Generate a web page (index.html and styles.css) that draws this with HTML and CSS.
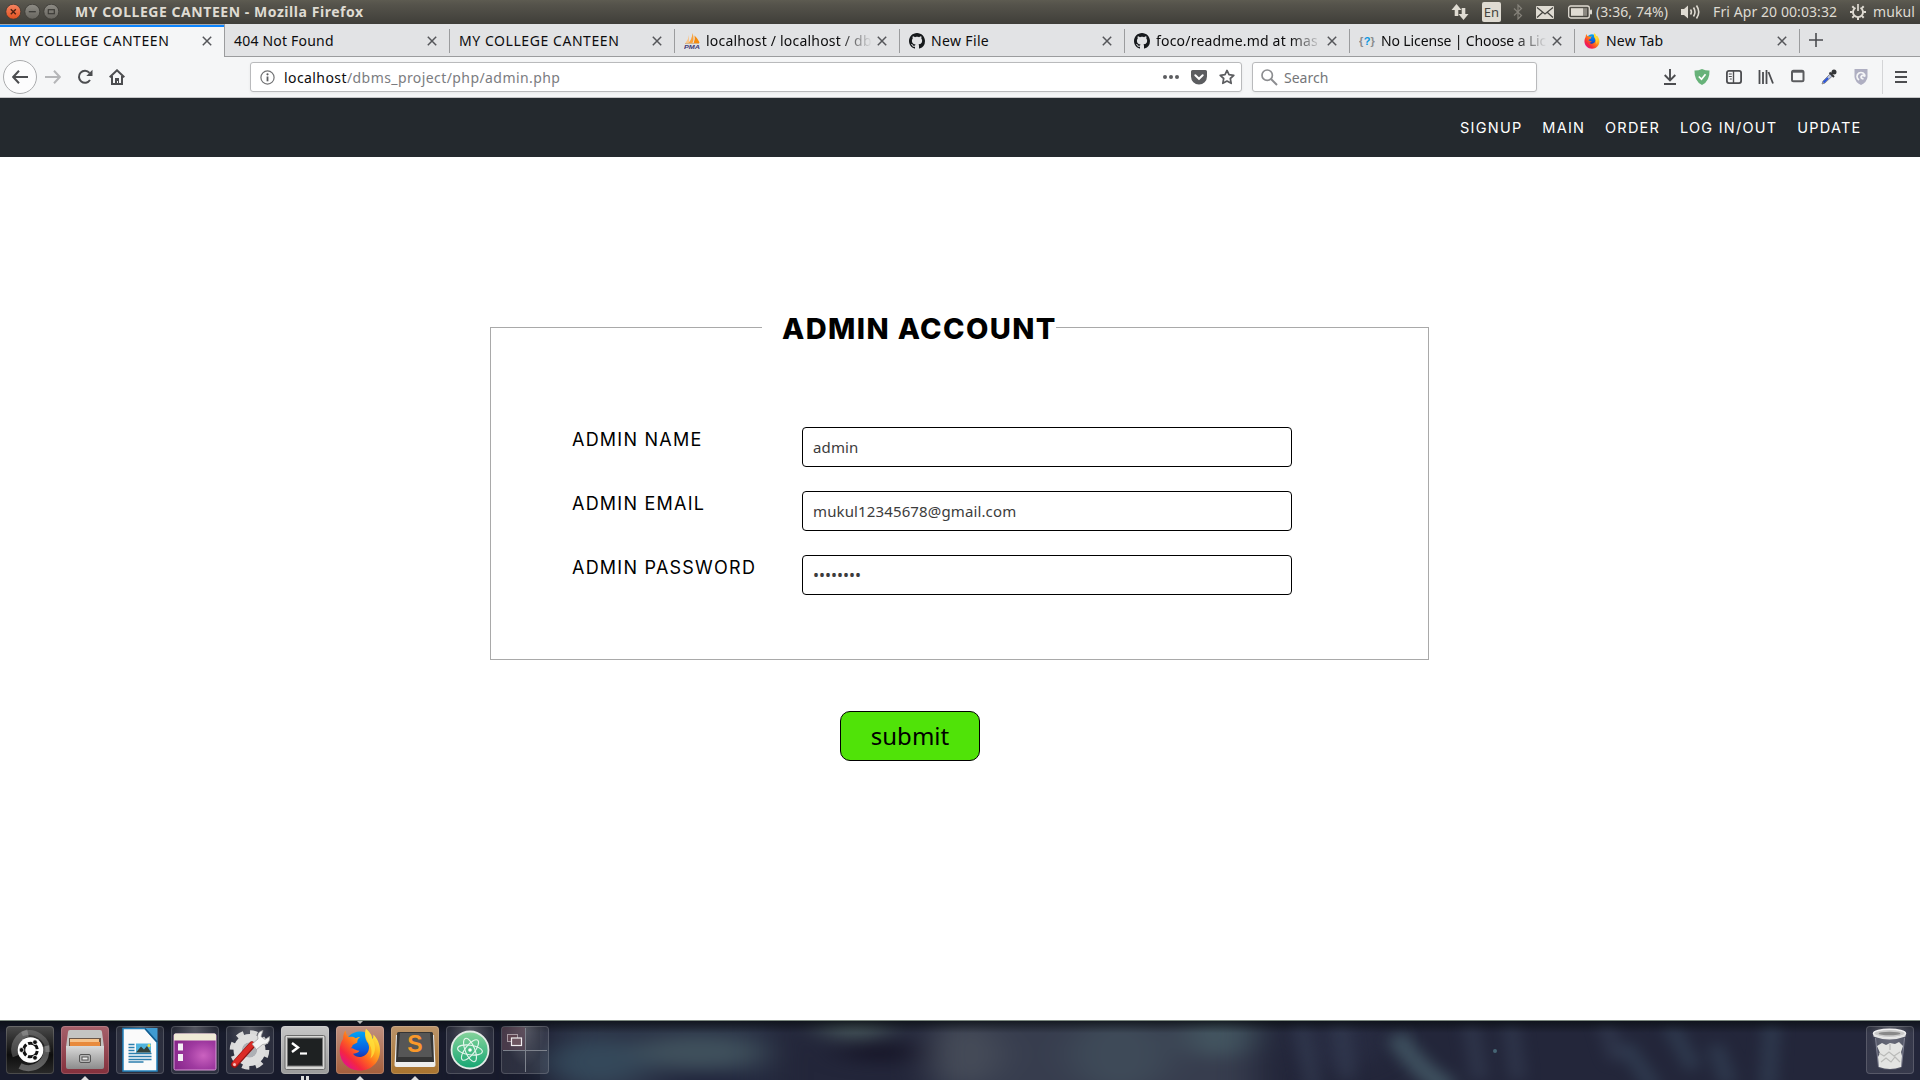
FILE: index.html
```html
<!DOCTYPE html>
<html lang="en">
<head>
<meta charset="utf-8">
<title>MY COLLEGE CANTEEN</title>
<link rel="stylesheet" href="styles.css">
</head>
<body>
<svg class="defs" width="0" height="0">
  <defs>
    <symbol id="close" viewBox="0 0 10 10"><path d="M.8.8l8.4 8.4M9.2.8L.8 9.2" stroke="#55565a" stroke-width="1.5" fill="none"/></symbol>
    <symbol id="github" viewBox="0 0 16 16"><path fill="#16191c" d="M8 0C3.58 0 0 3.58 0 8c0 3.54 2.29 6.53 5.47 7.59.4.07.55-.17.55-.38 0-.19-.01-.82-.01-1.49-2.01.37-2.53-.49-2.69-.94-.09-.23-.48-.94-.82-1.13-.28-.15-.68-.52-.01-.53.63-.01 1.08.58 1.23.82.72 1.21 1.87.87 2.33.66.07-.52.28-.87.51-1.07-1.78-.2-3.64-.89-3.64-3.95 0-.87.31-1.59.82-2.15-.08-.2-.36-1.02.08-2.12 0 0 .67-.21 2.2.82.64-.18 1.32-.27 2-.27s1.36.09 2 .27c1.53-1.04 2.2-.82 2.2-.82.44 1.1.16 1.92.08 2.12.51.56.82 1.27.82 2.15 0 3.07-1.87 3.75-3.65 3.95.29.25.54.73.54 1.48 0 1.07-.01 1.93-.01 2.2 0 .21.15.46.55.38A8.01 8.01 0 0 0 16 8c0-4.42-3.58-8-8-8z"/></symbol>
    <linearGradient id="fxBody" x1=".9" y1=".1" x2=".15" y2=".9"><stop offset="0" stop-color="#fff04a"/><stop offset=".3" stop-color="#ffb21f"/><stop offset=".55" stop-color="#ff6a1e"/><stop offset=".8" stop-color="#f5283f"/><stop offset="1" stop-color="#e3118a"/></linearGradient>
    <linearGradient id="fxGlobe" x1=".5" y1="0" x2=".5" y2="1"><stop offset="0" stop-color="#00a5f5"/><stop offset=".6" stop-color="#0a5be0"/><stop offset="1" stop-color="#2a1c80"/></linearGradient>
    <symbol id="firefox" viewBox="0 0 42 43">
      <circle cx="21" cy="19" r="15.500" fill="url(#fxGlobe)"/>
      <path fill="url(#fxBody)" d="M27 1c5 4 6 8 6.500 10 1-1.500 1-3 .8-4.500 4 4 6.700 9.500 6.700 16C41 34 32.500 42.500 21 42.500S.7 34 .7 22.500c0-5 1.500-9 3.300-11.500C4 6.500 5.500 3.500 6.500 2.500c.3 3 1.500 5 3 6.500 3-.6 5-.2 7.200 1.200 1.600-.9 3-1.200 4.300-1.200-2.500 2-2.700 3.500-2.700 5.500l-4.700 2.500c-.2 2-.9 2.500-2.200 3.300 3.600-.3 4.600 2.200 9.100 2.400-1.500 2.300-4.200 2.800-6.500 3 2.500 3.500 8 4.500 12 1.500 4.500-3.300 4.800-8.500 3-12C25.500 10.500 25.500 5 27 1z"/>
      <path fill="#ffe23c" opacity=".75" d="M27 1c5 4 6 8 6.500 10 4 8 3 15-2 19.500 1.500-5 1.500-10-1-14.500-3.500-5-5-10-3.500-15z"/>
    </symbol>
    <linearGradient id="silver" x1="0" y1="0" x2="0" y2="1"><stop offset="0" stop-color="#d9d9d9"/><stop offset="1" stop-color="#8c8c8c"/></linearGradient>
  </defs>
</svg>

<header class="titlebar">
  <div class="window-controls">
    <svg width="54" height="16" viewBox="0 0 54 16">
      <defs><linearGradient id="wc" x1="0" y1="0" x2="0" y2="1"><stop offset="0" stop-color="#8f8d86"/><stop offset="1" stop-color="#66645e"/></linearGradient>
      <linearGradient id="wx" x1="0" y1="0" x2="0" y2="1"><stop offset="0" stop-color="#f58563"/><stop offset="1" stop-color="#e2511f"/></linearGradient></defs>
      <circle cx="8.300" cy="7.700" r="7.500" fill="url(#wx)" stroke="#3a3833" stroke-width=".8"/><path d="M5.800 5.200l5 5M10.800 5.200l-5 5" stroke="#4b2012" stroke-width="1.400"/>
      <circle cx="27.300" cy="7.700" r="7.500" fill="url(#wc)" stroke="#3a3833" stroke-width=".8"/><path d="M23.800 7.700h7" stroke="#3c3b37" stroke-width="1.300"/>
      <circle cx="46.300" cy="7.700" r="7.500" fill="url(#wc)" stroke="#3a3833" stroke-width=".8"/><rect x="43.300" y="5.700" width="6" height="4" fill="none" stroke="#3c3b37" stroke-width="1.200"/>
    </svg>
  </div>
  <div class="window-title">MY COLLEGE CANTEEN - Mozilla Firefox</div>
  <div class="indicators">
    <svg class="ind-net" width="18" height="18" viewBox="0 0 18 18"><path fill="#dfdbd2" d="M5.500 1L10.500 7H7.300v6H3.700V7H.5zM12.500 17l5-6h-3.200V5h-3.600v6H7.500z"/></svg>
    <span class="ind-lang">En</span>
    <svg class="ind-bt" width="10" height="16" viewBox="0 0 10 16"><path d="M1 4.500l7.500 7L5 15V1l3.500 3.500-7.500 7" fill="none" stroke="#85827a" stroke-width="1.200"/></svg>
    <svg class="ind-mail" width="18" height="13" viewBox="0 0 18 13"><rect width="18" height="13" rx="1" fill="#dfdbd2"/><path d="M1 1.500L9 8l8-6.500M1 11.500l5.500-5M17 11.500l-5.500-5" fill="none" stroke="#45443f" stroke-width="1.200"/></svg>
    <svg class="ind-batt" width="24" height="14" viewBox="0 0 24 14"><rect x=".7" y="1" width="20.600" height="12" rx="2" fill="none" stroke="#dfdbd2" stroke-width="1.300"/><rect x="3" y="3.200" width="12" height="7.600" fill="#dfdbd2"/><rect x="15" y="3.200" width="4" height="7.600" fill="#8b8880"/><rect x="22" y="4.500" width="2" height="5" rx="1" fill="#dfdbd2"/></svg>
    <span class="ind-text power">(3:36, 74%)</span>
    <svg class="ind-snd" width="20" height="16" viewBox="0 0 20 16"><path fill="#dfdbd2" d="M0 5h3l4-3.500v13L3 11H0z"/><path d="M9.500 5.500q1.800 2.500 0 5M12.500 3.500q3 4.500 0 9M15.500 1.500q4.500 6.500 0 13" fill="none" stroke="#dfdbd2" stroke-width="1.600"/></svg>
    <span class="ind-text clock">Fri Apr 20 00:03:32</span>
    <svg class="ind-gear" width="16" height="16" viewBox="0 0 16 16"><g fill="none" stroke="#dfdbd2"><path d="M5.500 3.800a5 5 0 1 0 5 0" stroke-width="1.900"/><path d="M8 0v7" stroke-width="1.700"/><path d="M2.300 2.300l1.800 1.800M13.700 2.300l-1.800 1.800M0 8h2.700M13.300 8H16M2.300 13.700l1.800-1.800M13.700 13.700l-1.800-1.800M8 13.300V16" stroke-width="2"/></g></svg>
    <span class="ind-text">mukul</span>
  </div>
</header>

<div class="tabs">
  <div class="tab active"><span class="label caps">MY COLLEGE CANTEEN</span><svg class="x"><use href="#close"/></svg></div>
  <div class="tab"><span class="label">404 Not Found</span><svg class="x"><use href="#close"/></svg></div>
  <div class="tab"><span class="label caps">MY COLLEGE CANTEEN</span><svg class="x"><use href="#close"/></svg></div>
  <div class="tab"><svg class="fav" viewBox="0 0 16 16"><path d="M5 2v8H1.500Q4.500 6.500 5 2z" fill="#f9c58a"/><path d="M8.500 0Q10.500 6 8.500 10h-4Q8 6 8.500 0z" fill="#f9a23c"/><path d="M10.500 2.500Q15 7 15.500 10H9.700Q11.500 6.500 10.500 2.500z" fill="#f58a0c"/><path d="M1 10.500h14" stroke="#c9924e" stroke-width=".6"/><text x="0" y="16" class="pma" textLength="16" lengthAdjust="spacingAndGlyphs">PMA</text></svg><span class="label fade">localhost / localhost / db</span><svg class="x"><use href="#close"/></svg></div>
  <div class="tab"><svg class="fav"><use href="#github"/></svg><span class="label snug">New File</span><svg class="x"><use href="#close"/></svg></div>
  <div class="tab"><svg class="fav"><use href="#github"/></svg><span class="label fade">foco/readme.md at mas</span><svg class="x"><use href="#close"/></svg></div>
  <div class="tab"><svg class="fav" viewBox="0 0 16 16"><text x="0" y="11.500" class="brace">{</text><text x="11.500" y="11.500" class="brace">}</text><text x="4.800" y="12" class="ques">?</text></svg><span class="label fade tight">No License | Choose a Lic</span><svg class="x"><use href="#close"/></svg></div>
  <div class="tab"><svg class="fav"><use href="#firefox"/></svg><span class="label">New Tab</span><svg class="x"><use href="#close"/></svg></div>
  <div class="new-tab"><svg width="14" height="14" viewBox="0 0 14 14"><path d="M7 0v14M0 7h14" stroke="#4a4b4f" stroke-width="1.600"/></svg></div>
</div>

<div class="toolbar">
  <div class="nav-buttons">
    <span class="back"><svg width="16" height="14" viewBox="0 0 16 14"><path d="M7 .8L1.200 7 7 13.200M1.500 7H16" fill="none" stroke="#4c4d50" stroke-width="2"/></svg></span>
    <svg width="16" height="14" viewBox="0 0 16 14"><path d="M9 .8L14.800 7 9 13.200M14.500 7H0" fill="none" stroke="#b5b6b8" stroke-width="2"/></svg>
    <svg class="reload" width="16" height="16" viewBox="0 0 16 16"><path d="M12.500 3.800A6 6 0 1 0 13 11" fill="none" stroke="#4c4d50" stroke-width="2"/><path d="M15.500.8V7H9.300z" fill="#4c4d50"/></svg>
    <svg width="16" height="16" viewBox="0 0 16 16"><path d="M.7 8.200L8 1.300l7.300 6.900" fill="none" stroke="#4c4d50" stroke-width="2"/><path d="M3 7v8h10V7" fill="none" stroke="#4c4d50" stroke-width="2"/><path d="M6 14.500V9h4v5.500H9V12H8v2.500z" fill="#4c4d50"/></svg>
  </div>
  <div class="urlbar">
    <svg width="15" height="15" viewBox="0 0 15 15"><circle cx="7.500" cy="7.500" r="6.600" fill="none" stroke="#737476" stroke-width="1.200"/><path d="M7.500 6.500V11.300" stroke="#5c5d60" stroke-width="1.800"/><circle cx="7.500" cy="4.300" r="1.100" fill="#5c5d60"/></svg>
    <span class="url"><b>localhost</b>/dbms_project/php/admin.php</span>
    <svg class="dots" width="16" height="4" viewBox="0 0 16 4"><g fill="#5c5d60"><circle cx="2" cy="2" r="2"/><circle cx="8" cy="2" r="2"/><circle cx="14" cy="2" r="2"/></g></svg>
    <svg width="16" height="15" viewBox="0 0 16 15"><path d="M1.500 0h13A1.500 1.500 0 0 1 16 1.500V6.500a8 8 0 0 1-16 0V1.500A1.500 1.500 0 0 1 1.500 0z" fill="#5c5d60"/><path d="M4.300 5.300L8 8.800l3.700-3.500" fill="none" stroke="#fff" stroke-width="2" stroke-linecap="round"/></svg>
    <svg width="16" height="16" viewBox="0 0 16 16"><path d="M8 1.400l2 4.300 4.800.6-3.500 3.200.9 4.800L8 12l-4.200 2.300.9-4.800L1.200 6.300 6 5.700z" fill="none" stroke="#5c5d60" stroke-width="1.700" stroke-linejoin="round"/></svg>
  </div>
  <div class="searchbar">
    <svg width="17" height="17" viewBox="0 0 17 17"><circle cx="6.200" cy="6.200" r="5.200" fill="none" stroke="#8c8d90" stroke-width="1.700"/><path d="M10 10l6 6" stroke="#8c8d90" stroke-width="2"/></svg>
    <span>Search</span>
  </div>
  <div class="tools">
    <svg width="16" height="16" viewBox="0 0 16 16"><path d="M8 0v11M2.700 6L8 11.300 13.300 6M2 15h12" fill="none" stroke="#4c4d50" stroke-width="1.900"/></svg>
    <svg width="16" height="16" viewBox="0 0 16 16"><path d="M8 0q4 1.700 7.500 1.500Q16 12 8 16 0 12 .5 1.500 4 1.700 8 0z" fill="#67b279"/><path d="M4.800 7.500L7.500 10.200 11.500 5.200" fill="none" stroke="#fff" stroke-width="1.700"/></svg>
    <svg width="16" height="16" viewBox="0 0 16 16"><rect x=".9" y="1.900" width="14.200" height="12.200" rx="2" fill="none" stroke="#4c4d50" stroke-width="1.800"/><path d="M7.500 2v12" stroke="#4c4d50" stroke-width="1.400"/><path d="M2.800 5h3M2.800 7.500h3M3.800 10h2" stroke="#4c4d50"/></svg>
    <svg width="16" height="16" viewBox="0 0 16 16"><path d="M1.500 1v14M5 3v12M8.500 1v14M10.500 3l4.500 11.500" fill="none" stroke="#4c4d50" stroke-width="1.800"/></svg>
    <svg width="16" height="16" viewBox="0 0 16 16"><rect x="2" y="1.700" width="11.500" height="10.600" rx="1.500" fill="none" stroke="#5b5c5f" stroke-width="2"/><path d="M2 2.700h11.500" stroke="#5b5c5f" stroke-width="2"/></svg>
    <svg width="16" height="16" viewBox="0 0 16 16"><path d="M1 15l1-3 7.500-7.500 2.200 2.200L4 14z" fill="#b9c4e4" stroke="#777" stroke-width=".8"/><path d="M2.500 13.500L7 9" stroke="#2852d8" stroke-width="2"/><path d="M8.500 3.500l4.500 4.500M10 5.500L13.500 2" stroke="#333436" stroke-width="2"/><circle cx="13" cy="3" r="2.500" fill="#333436"/></svg>
    <svg width="16" height="16" viewBox="0 0 16 16"><path d="M1.500 0h13v8Q14 13 8 16 2 13 1.500 8z" fill="#afafc2"/><path d="M6 11A4 4 0 1 1 12 7.500M12 7.500Q9.500 5.500 8.300 7.300T10.500 9.800" fill="none" stroke="#f5f6f7" stroke-width="1.700"/></svg>
  </div>
  <div class="menu"><svg width="12" height="12" viewBox="0 0 12 12"><path d="M0 1h12M0 6h12M0 11h12" stroke="#4c4d50" stroke-width="2"/></svg></div>
</div>

<nav class="site-nav">
  <a>SIGNUP</a><a>MAIN</a><a>ORDER</a><a>LOG IN/OUT</a><a>UPDATE</a>
</nav>

<main class="page">
  <form class="admin-form">
    <fieldset class="account">
      <legend>ADMIN ACCOUNT</legend>
      <div class="fields">
        <label>ADMIN NAME</label><input type="text" value="admin">
        <label>ADMIN EMAIL</label><input type="text" value="mukul12345678@gmail.com">
        <label>ADMIN PASSWORD</label><div class="secret">••••••••</div>
      </div>
    </fieldset>
    <button type="button" class="submit">submit</button>
  </form>
</main>

<footer class="dock">
  <svg class="wallpaper" width="1920" height="60" viewBox="0 0 1920 60" preserveAspectRatio="none">
    <defs>
      <filter id="soft" filterUnits="userSpaceOnUse" x="400" y="-60" width="1520" height="180" color-interpolation-filters="sRGB"><feGaussianBlur stdDeviation="18 8"/></filter>
      <filter id="wisp" filterUnits="userSpaceOnUse" x="500" y="-60" width="1420" height="180" color-interpolation-filters="sRGB"><feGaussianBlur stdDeviation="8 7"/></filter>
      <linearGradient id="edge" x1="0" y1="0" x2="0" y2="1"><stop offset="0" stop-color="#080c10" stop-opacity=".75"/><stop offset=".22" stop-color="#080c10" stop-opacity="0"/></linearGradient>
    </defs>
    <rect width="1920" height="60" fill="#23263a"/>
    <rect width="540" height="60" fill="#181b2c"/>
    <g filter="url(#soft)">
      <rect x="420" y="-20" width="110" height="100" fill="#181b2c"/>
      <rect x="560" y="0" width="210" height="80" fill="#2d3649"/>
      <ellipse cx="595" cy="42" rx="50" ry="22" fill="#34485a"/>
      <ellipse cx="700" cy="32" rx="65" ry="16" fill="#3f505c"/>
      <ellipse cx="710" cy="64" rx="60" ry="8" fill="#1c2038"/>
      <ellipse cx="855" cy="6" rx="36" ry="14" fill="#46565a"/>
      <ellipse cx="880" cy="32" rx="40" ry="10" fill="#171628"/>
      <rect x="930" y="-10" width="325" height="90" fill="#373d4e"/>
      <ellipse cx="965" cy="34" rx="36" ry="30" fill="#454b58"/>
      <ellipse cx="1120" cy="34" rx="50" ry="36" fill="#3e4a58"/>
      <ellipse cx="1220" cy="14" rx="36" ry="24" fill="#435560"/>
      <ellipse cx="1340" cy="20" rx="40" ry="30" fill="#282c42"/>
    </g>
    <g filter="url(#wisp)" fill="none" stroke-width="14" opacity=".7">
      <path d="M1396 15q20 35 55 55" stroke-width="20" stroke="#4b6470"/>
      <path d="M1300 0l14 70M1340 0l8 60M1470 0l10 60M1510 0l8 60M1605 0l12 40" stroke="#363f55"/>
      <path d="M1625 25q20 30 30 44M1670 5l24 44M1715 25l14 40M1772 0l-4 70" stroke="#36465b"/>
    </g>
    <circle cx="1495" cy="31" r="2" fill="#4f7482" opacity=".8"/>
    <rect width="1920" height="60" fill="url(#edge)"/>
    <rect width="1920" height="1" fill="#7d8a80"/>
  </svg>
  <div class="launcher">
    <span class="tile dark"><svg viewBox="0 0 48 48"><g fill="none" stroke="#fff"><path d="M10 30A17 17 0 0 1 22 7" opacity=".22" stroke-width="7"/><path d="M16 8A19 19 0 0 1 42 26" opacity=".18" stroke-width="5"/><path d="M40 20A18 18 0 0 1 14 40" opacity=".3" stroke-width="6"/></g><circle cx="24.500" cy="24" r="12.800" fill="#fff"/><circle cx="24.500" cy="24" r="6.800" fill="none" stroke="#111" stroke-width="3" stroke-dasharray="12.200 2" stroke-dashoffset="-1"/><g fill="#111" stroke="#fff" stroke-width=".8"><circle cx="15.500" cy="24" r="2.400"/><circle cx="29" cy="16.200" r="2.400"/><circle cx="29" cy="31.800" r="2.400"/></g></svg></span>
    <span class="tile red active"><svg viewBox="0 0 48 48"><path d="M7 6q0-2 2-2h30q2 0 2 2l2 15H5z" fill="#c4c4c2"/><path d="M8 12h32v9H8z" fill="#6b5648"/><path d="M9 13h29v3H9z" fill="#f6c28a"/><path d="M9 16h30v6H9z" fill="#e88a3c"/><path d="M5 20h38v21q0 2-2 2H7q-2 0-2-2z" fill="url(#silver)"/><rect x="18.500" y="28.500" width="11" height="8" rx="1.500" fill="#b5b5b5" stroke="#555"/><rect x="21" y="31" width="6" height="3" fill="#eee" stroke="#555"/></svg></span>
    <span class="tile"><svg viewBox="0 0 48 48"><path d="M7 2.500h22L41 16v29H7z" fill="#fafafa" stroke="#2382bd" stroke-width="1.500"/><path d="M29 2h12.500v13.500z" fill="#3f9bd2"/><path d="M29 2.500L41 16" stroke="#145d90" stroke-width="1.500"/><path d="M12.500 18.500h6M12.500 21.500h6M12.500 24.500h6M12.500 27.500h23M12.500 30.500h23M12.500 33.500h23M12.500 36h15" stroke="#2c7fae" stroke-width="1.300"/><rect x="20" y="17.500" width="15" height="9" fill="#4fb3dd"/><path d="M20 26.500l5-6 3 3 3-3.500 4 6.500z" fill="#34423a"/><circle cx="33" cy="19.500" r="1.500" fill="#f4e03e"/></svg></span>
    <span class="tile"><svg viewBox="0 0 48 48"><defs><radialGradient id="vio" cx=".7" cy=".6" r=".75"><stop offset="0" stop-color="#cb62c0"/><stop offset=".5" stop-color="#9f3aa0"/><stop offset="1" stop-color="#86268a"/></radialGradient></defs><rect x="3" y="8" width="42" height="36" rx="1.500" fill="url(#vio)" stroke="#d89bd6"/><path d="M3 9q0-1.500 1.500-1.500h39Q45 7.500 45 9v5.500H3z" fill="#efead6"/><path d="M7 17.500h5v7H7zM7 28h5v7H7z" fill="#f4eef4"/></svg></span>
    <span class="tile"><svg viewBox="0 0 48 48"><circle cx="23.500" cy="24" r="16.800" fill="none" stroke="#d9d9d9" stroke-width="6" stroke-dasharray="6.900 6.300"/><circle cx="23.500" cy="24" r="11.500" fill="none" stroke="#dedede" stroke-width="9"/><circle cx="23.500" cy="24" r="7.500" fill="#aeb0b5"/><path d="M8.500 38.500L26 19" stroke="#8f1414" stroke-width="7" stroke-linecap="round"/><path d="M8.500 38L26 18.500" stroke="#db2b26" stroke-width="5" stroke-linecap="round"/><path d="M26 18l6-5q-2-7 5-8.500l-2 6 4 3 4.500-3q1 8-7 8l-6 5z" fill="#f3f3f3" stroke="#999" stroke-width=".7"/><circle cx="8.500" cy="38.500" r="1.500" fill="#f3c4c0"/></svg></span>
    <span class="tile grey active two"><svg viewBox="0 0 48 48"><rect x="4" y="9.500" width="40" height="34" rx="1.500" fill="#d8d8d6" stroke="#6b6b6b"/><rect x="6.500" y="12" width="35" height="28" fill="#1e2122" stroke="#777"/><path d="M11 17l6 4.500-6 4.500" fill="none" stroke="#fff" stroke-width="2.400"/><path d="M19 27.500h7" stroke="#fff" stroke-width="2.200"/></svg></span>
    <span class="tile rust active current"><svg viewBox="0 0 48 48"><use href="#firefox" x="3" y="2" width="42" height="43"/></svg></span>
    <span class="tile amber active"><svg viewBox="0 0 48 48"><path d="M5 9h38l1.500 30q0 2-2 2h-37q-2 0-2-2z" fill="#eee"/><path d="M6 7.500q0-1.500 1.500-1.500h33Q42 6 42 7.500L43 36H5z" fill="#343434"/><path d="M9 7h30l2 24H7z" fill="#565656"/><text x="24" y="26" class="subl" text-anchor="middle">S</text></svg></span>
    <span class="tile"><svg viewBox="0 0 48 48"><defs><linearGradient id="atom" x1="0" y1="0" x2="0" y2="1"><stop offset="0" stop-color="#87d49b"/><stop offset="1" stop-color="#16a673"/></linearGradient></defs><circle cx="24" cy="24" r="18.500" fill="url(#atom)" stroke="#e3ece6" stroke-width="1.800"/><g fill="none" stroke="#fff" stroke-width="1.100" opacity=".85"><ellipse cx="24" cy="24" rx="12.500" ry="4.800" transform="rotate(8 24 24)"/><ellipse cx="24" cy="24" rx="12.500" ry="4.800" transform="rotate(68 24 24)"/><ellipse cx="24" cy="24" rx="12.500" ry="4.800" transform="rotate(128 24 24)"/></g><circle cx="24" cy="24" r="1.800" fill="#fff"/></svg></span>
    <span class="tile"><svg viewBox="0 0 48 48"><path d="M1 1h23v23H1z" fill="#6d4a58" opacity=".45"/><path d="M24.500 2v44M2 24.500h44" stroke="#7d828c"/><rect x="6.500" y="8.500" width="10" height="7" fill="#5e4450" stroke="#a89aa2"/><rect x="10.500" y="12" width="10" height="7.500" fill="#6d5560" stroke="#f0edef" stroke-width="1.200"/></svg></span>
    <span class="tile trash"><svg viewBox="0 0 48 48"><path d="M9 11h30l-3.500 31q-11.500 4-23 0z" fill="#cfd3dc" opacity=".16"/><path d="M9.500 12l3 29M38.500 12l-3 29" stroke="#aab" stroke-width=".8" opacity=".7"/><path d="M11 20l5-3 4 2 4-2 5 1 4-2 4 4-2 6 1 4-1 11q-11 4-22 0l-1-10 2-4z" fill="#e3e4e2"/><path d="M13 27l5 3 5-4 5 4 6-4M15 36l5-4 5 4 4-5 5 5M24 18v6" fill="none" stroke="#babbb9" stroke-width="1.200"/><ellipse cx="23.500" cy="7.500" rx="16" ry="4.200" fill="#c9c9c9" stroke="#f1f1f1" stroke-width="1.500"/><ellipse cx="23.500" cy="7.500" rx="11" ry="1.800" fill="#898989"/><path d="M7.500 8q16 7 32 0v2.500q-16 6-32 0z" fill="#e4e4e4"/></svg></span>
  </div>
</footer>
</body>
</html>
```
FILE: styles.css
```css
* { box-sizing: border-box; }

body {
  margin: 0;
  width: 1920px;
  height: 1080px;
  overflow: hidden;
  display: flex;
  flex-direction: column;
  background: #fff;
  font: 14px/20px "Noto Sans", sans-serif;
  color: #0c0c0d;
}

svg { display: block; flex: none; }
.defs { position: absolute; }

/* Desktop panel */
.titlebar {
  height: 24px;
  flex: none;
  display: flex;
  align-items: center;
  padding: 0 5px;
  background: linear-gradient(#5d5b51, #55534b 20%, #3f3e39);
  color: #dfdbd2;
}
.window-title {
  margin-left: 16px;
  font-weight: 700;
  letter-spacing: .55px;
}
.indicators {
  margin-left: auto;
  display: flex;
  align-items: center;
  white-space: nowrap;
}
.ind-text { letter-spacing: .08px; line-height: 24px; }
.ind-lang {
  width: 19px;
  height: 20px;
  margin: 0 12px 0 13px;
  border-radius: 2px;
  background: #dfdbd2;
  color: #45443f;
  font-size: 13px;
  line-height: 20px;
  text-align: center;
}
.ind-mail { margin-left: 13px; }
.ind-batt { margin: 0 4px 0 14px; }
.ind-snd { margin: 0 12px 0 13px; }
.ind-gear { margin: 0 7px 0 13px; }

/* Tab strip */
.tabs {
  height: 33px;
  flex: none;
  display: flex;
  background: #e2e3e5;
}
.tab {
  width: 225px;
  height: 33px;
  display: flex;
  align-items: center;
  padding: 1px 13px 0 9px;
  border-bottom: 1px solid #9b9c9e;
  background: linear-gradient(#9b9c9e, #9b9c9e) 100% 5px / 1px 24px no-repeat;
}
.tab.active {
  background: #f5f6f7;
  border-right: 1px solid #9b9c9e;
  border-bottom: 0;
  box-shadow: inset 0 1px #a9aaac, inset 0 3px #0a84ff;
  padding: 0 12px 0 9px;
}
.label {
  flex: 1;
  min-width: 0;
  white-space: nowrap;
  letter-spacing: .2px;
}
.caps { letter-spacing: .56px; }
.snug { letter-spacing: .35px; }
.tight { letter-spacing: -.13px; }
.fade {
  margin-right: 5px;
  -webkit-mask-image: linear-gradient(90deg, #000 calc(100% - 32px), transparent);
  mask-image: linear-gradient(90deg, #000 calc(100% - 32px), transparent);
}
.tab .x { width: 10px; height: 10px; }
.fav { width: 16px; height: 16px; margin-right: 6px; }
.pma { font: italic bold 6px "Liberation Sans", sans-serif; fill: #3f3a75; }
.brace { font: bold 11px "Liberation Sans", sans-serif; fill: #8a8b8d; }
.ques { font: bold 11px "Liberation Sans", sans-serif; fill: #0a96e0; }
.subl { font: bold 23px "Liberation Sans", sans-serif; fill: #f9982a; }
.new-tab {
  flex: 1;
  display: flex;
  align-items: center;
  padding-left: 9px;
  border-bottom: 1px solid #9b9c9e;
}

/* Navigation toolbar */
.toolbar {
  height: 41px;
  flex: none;
  display: flex;
  align-items: center;
  background: #f5f6f7;
  border-bottom: 1px solid #c4c5c7;
}
.nav-buttons {
  width: 250px;
  display: flex;
  align-items: center;
  gap: 16px;
  padding-left: 3px;
}
.back {
  width: 34px;
  height: 34px;
  margin-right: -8px;
  display: flex;
  align-items: center;
  justify-content: center;
  border: 1px solid #aaabad;
  border-radius: 50%;
  background: #fcfcfd;
}
.urlbar, .searchbar {
  height: 30px;
  display: flex;
  align-items: center;
  background: #fff;
  border: 1px solid #b9babc;
  border-radius: 3px;
  box-shadow: 0 1px 3px rgba(0, 0, 0, .06);
}
.urlbar { width: 992px; padding: 0 6px 0 9px; gap: 12px; }
.url { flex: 1; margin-left: -3px; padding-top: 1px; color: #7b7c7f; letter-spacing: .42px; }
.url b { font-weight: 400; color: #0c0c0d; }
.searchbar {
  width: 285px;
  margin-left: 10px;
  padding-left: 8px;
  gap: 6px;
  color: #757679;
}
.searchbar span { padding-top: 1px; }
.tools {
  display: flex;
  gap: 15.900px;
  margin-left: 125px;
}
.menu {
  height: 34px;
  margin-left: 13px;
  padding-left: 12px;
  border-left: 1px solid #d4d5d7;
  display: flex;
  align-items: center;
}

/* Site navigation */
.site-nav {
  height: 59px;
  flex: none;
  display: flex;
  align-items: center;
  justify-content: flex-end;
  gap: 19.800px;
  padding: 1px 58.500px 0 0;
  background: #24292e;
  color: #fff;
  font-family: Inter, sans-serif;
  font-size: 14.500px;
  letter-spacing: 1.240px;
}

/* Admin form */
.page {
  height: 863px;
  flex: none;
  padding: 149px 491px 0 490px;
}
.account {
  height: 354px;
  min-width: 0;
  margin: 0;
  padding: 78px 0 0 81px;
  border: 1px solid #a9a9a9;
}
.account legend {
  width: 294px;
  height: 43px;
  margin-left: 190px;
  padding: 1px 0 0 20px;
  font: 800 29px/43px Inter, sans-serif;
  letter-spacing: 1.380px;
  white-space: nowrap;
  color: #000;
}
.fields {
  display: grid;
  grid-template-columns: 230px 490px;
  grid-auto-rows: 40px;
  row-gap: 24px;
}
.fields label {
  padding-top: 1px;
  font: 18px/24px Inter, sans-serif;
  letter-spacing: 1.230px;
  color: #000;
}
.fields input, .secret {
  height: 40px;
  padding: 0 10px 1px;
  border: 1px solid #000;
  border-radius: 4px;
  background: #fff;
  color: #3c3c3c;
  font: 15px "Noto Sans", sans-serif;
  letter-spacing: .13px;
}
.secret { font-size: 16px; line-height: 39px; letter-spacing: 0; }
.submit {
  display: block;
  width: 140px;
  height: 50px;
  margin: 51px 0 0 350px;
  padding: 0 0 2px;
  border: 1px solid #000;
  border-radius: 10px;
  background: #50e308;
  color: #000;
  font: 24px "Noto Sans", sans-serif;
}

/* Dock */
.dock { position: relative; height: 60px; flex: none; overflow: hidden; }
.wallpaper { position: absolute; inset: 0; }
.launcher {
  position: relative;
  display: flex;
  gap: 7px;
  padding: 6px;
}
.tile {
  position: relative;
  width: 48px;
  height: 48px;
  border-radius: 4px;
  background: radial-gradient(ellipse at 50% 0, rgba(255, 255, 255, .28), rgba(255, 255, 255, .09) 60%);
  box-shadow: inset 0 0 0 1px rgba(255, 255, 255, .16);
}
.tile svg { width: 48px; height: 48px; }
.tile.dark { background: linear-gradient(#4b4b4b, #0d0d0d 60%, #2a2a2a); }
.tile.red { background: linear-gradient(#a5606a, #84303c); }
.tile.grey { background: linear-gradient(#c6c6c6, #9b9b9b); }
.tile.rust { background: linear-gradient(#c09080, #a55f3c); }
.tile.amber { background: linear-gradient(#bb946a, #a9742f); }
.tile.trash { margin-left: auto; }
.tile.active::after {
  content: "";
  position: absolute;
  left: 20px;
  top: 50px;
  width: 8px;
  height: 4px;
  background: #dcdcdc;
  clip-path: polygon(50% 0, 100% 100%, 0 100%);
}
.tile.two::after {
  clip-path: none;
  background: linear-gradient(90deg, #dcdcdc 3px, transparent 3px 5px, #dcdcdc 5px);
}
.tile.current::before {
  content: "";
  position: absolute;
  left: 21px;
  top: -5px;
  width: 6px;
  height: 3px;
  background: #b9bab9;
  clip-path: polygon(0 0, 100% 0, 50% 100%);
}
```
